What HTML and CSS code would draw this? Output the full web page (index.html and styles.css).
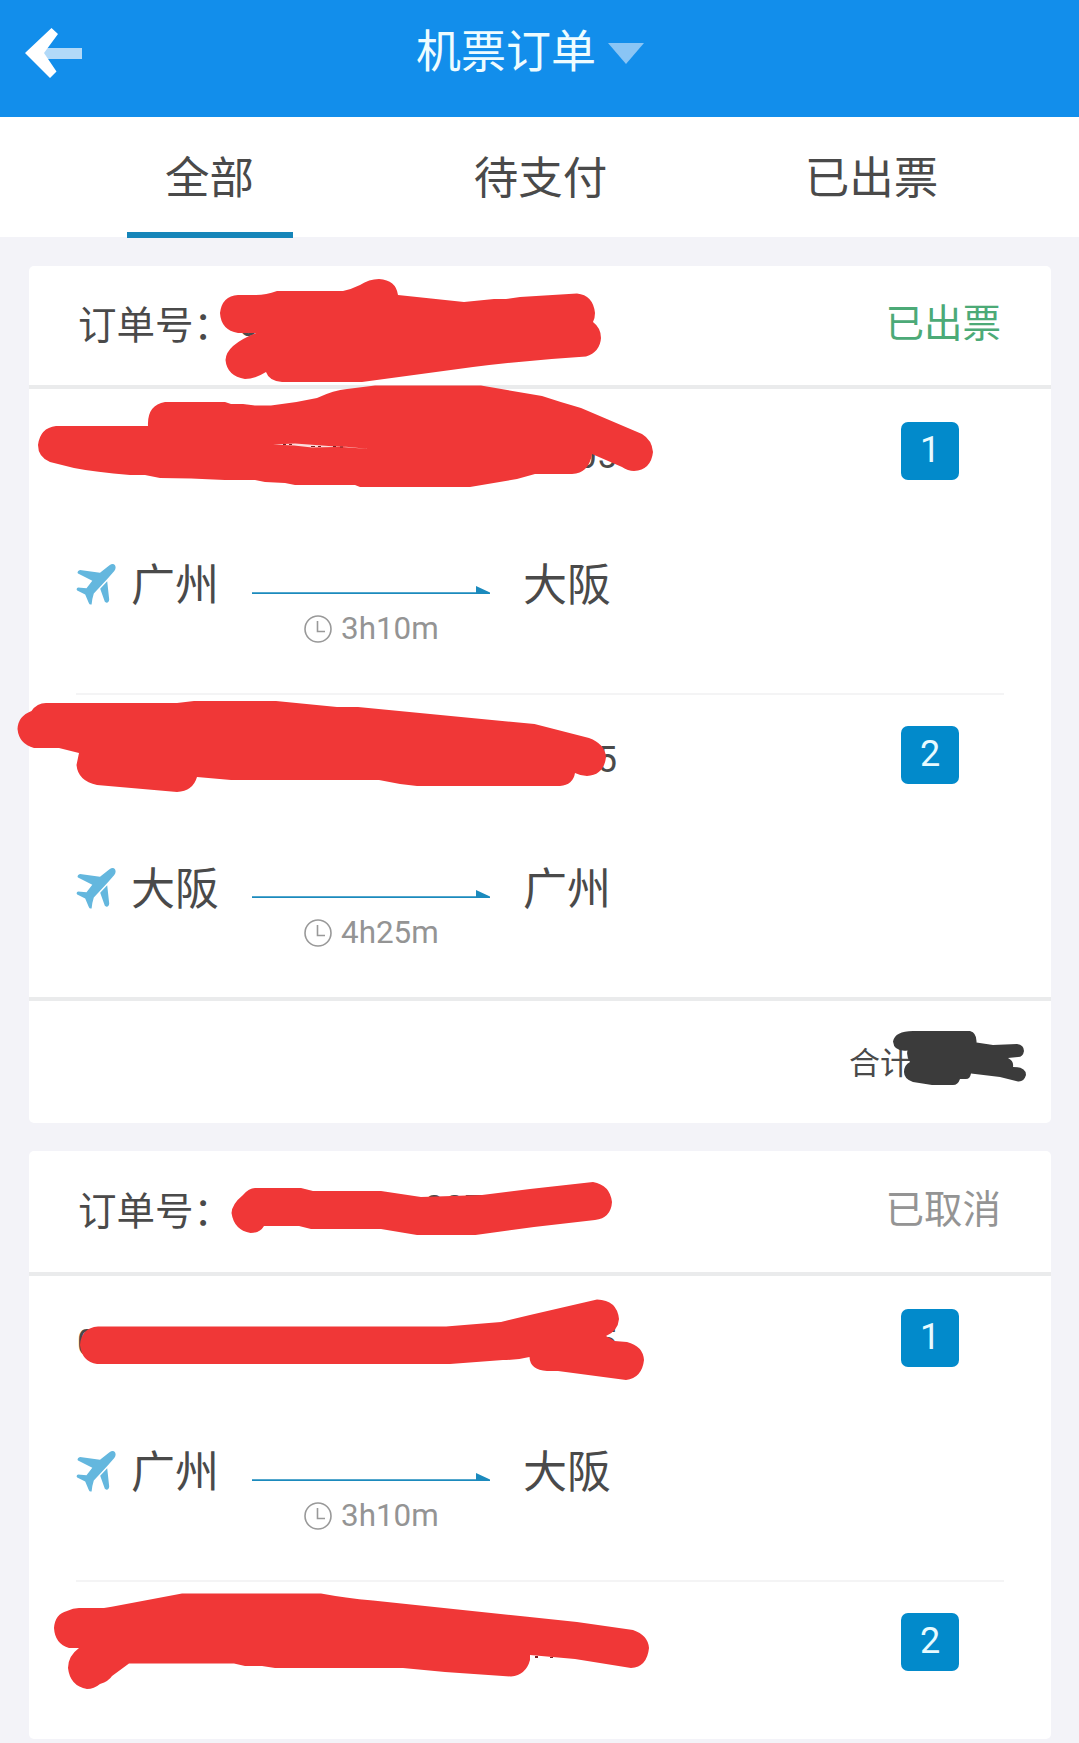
FILE: index.html
```html
<!DOCTYPE html>
<html lang="zh-Hans">
<head>
  <meta charset="UTF-8" />
  <meta name="viewport" content="width=device-width, initial-scale=1.0"/>
  <title>机票订单</title>
  <link rel="stylesheet" href="styles.css">
</head>
<body>
  <!-- 共用图标 -->
  <svg class="icon-defs">
    <symbol id="plane" viewBox="0 0 40 42">
      <path d="M4 7 24 9.7 33.5 2.2Q37-.3 39 2.2 40.5 5 38.3 8L31.5 15.7 17.8 30.5Q16 36 15.6 41.5 13.4 42 12.8 40L9.2 31.5 1.2 27.6Q-.2 25.5 2 24.6L10.5 25.2 16.3 17.7 2 10.6Q.5 8 4 7Z"/>
      <path d="M31.2 18.2 33.2 36.5Q33 40 30 39.6 28.6 39.3 28.2 37L24.2 25.7Z"/>
    </symbol>
    <symbol id="clock" viewBox="0 0 28 28">
      <circle cx="14" cy="14" r="13"/>
      <path d="M13.5 6v10.5H21"/>
    </symbol>
    <symbol id="arrow" viewBox="0 0 238 8">
      <path d="M0 6.2H224V0L238 6.6V8H0Z"/>
    </symbol>
  </svg>

  <header class="header">
    <svg class="back" viewBox="0 0 58 50">
      <path class="back-shaft" d="M17 20H57V31H17Z"/>
      <path class="back-head" d="M26.500 0 33 6 19 25 31.500 43.500 25 50 0 25Z"/>
    </svg>
    <div class="title">
      <h1>机票订单</h1>
      <svg class="caret" viewBox="0 0 36 21"><path d="M0 0H36L18 21Z"/></svg>
    </div>
  </header>

  <nav class="tabs">
    <a class="tab active">全部</a>
    <a class="tab">待支付</a>
    <a class="tab">已出票</a>
  </nav>

  <main class="orders">
    <section class="order">
      <div class="order-head">
        <span class="order-no">订单号：<span class="digits first">6</span></span>
        <span class="status issued">已出票</span>
      </div>
      <div class="segment">
        <div class="segment-head">
          <div class="segment-info"><span></span><span>05</span></div>
          <span class="badge">1</span>
        </div>
        <div class="route">
          <svg class="plane"><use href="#plane"/></svg>
          <span class="city">广州</span>
          <div class="flight">
            <svg class="arrow"><use href="#arrow"/></svg>
            <div class="duration"><svg class="clock"><use href="#clock"/></svg>3h10m</div>
          </div>
          <span class="city">大阪</span>
        </div>
      </div>
      <div class="segment">
        <div class="segment-head">
          <div class="segment-info"><span></span><span>5</span></div>
          <span class="badge">2</span>
        </div>
        <div class="route">
          <svg class="plane"><use href="#plane"/></svg>
          <span class="city">大阪</span>
          <div class="flight">
            <svg class="arrow"><use href="#arrow"/></svg>
            <div class="duration"><svg class="clock"><use href="#clock"/></svg>4h25m</div>
          </div>
          <span class="city">广州</span>
        </div>
      </div>
      <div class="order-total">合计</div>
    </section>

    <section class="order">
      <div class="order-head canceled">
        <span class="order-no">订单号：<span class="digits middle">007</span></span>
        <span class="status">已取消</span>
      </div>
      <div class="segment">
        <div class="segment-head">
          <div class="segment-info"><span>0</span><span>5</span></div>
          <span class="badge">1</span>
        </div>
        <div class="route">
          <svg class="plane"><use href="#plane"/></svg>
          <span class="city">广州</span>
          <div class="flight">
            <svg class="arrow"><use href="#arrow"/></svg>
            <div class="duration"><svg class="clock"><use href="#clock"/></svg>3h10m</div>
          </div>
          <span class="city">大阪</span>
        </div>
      </div>
      <div class="segment last">
        <div class="segment-head">
          <div class="segment-info"></div>
          <span class="badge">2</span>
        </div>
      </div>
    </section>
  </main>

  <!-- 涂抹遮挡 -->
  <svg class="marks" viewBox="0 0 1079 1743">
    <path d="M238 295H256Q266 295 277 291H343Q352 289 360 285 369 279 379 279 396 280 398 295L464 302 494 299H506L520 297 577 293.500Q593 295 595 313 595 318 593 322 601 328 601 338 600 352 586 356.500 530 360 473 367L362 382H282Q269 381 266 372 255 379 245 379 227 376 225.500 360 226 345 256 333H238Q221 330 220 313 222 296 238 295Z"/>
    <path d="M56 426H148Q147 405 165 402H225L231 404H243L255 405.500H271Q295 403 317 398 334 390 347 389L375 385.500H481L542 396Q560 402 581 408L642 434Q652 440 653 452 651 470 634 471 628 471 622 467L592 454Q589 473 572 474H535L517 479 470 487H360L355 485H295L285 483 265 482 255 480H225Q190 478 160 478L145 475H130Q95 472 74 468L50 462Q38 457 38 445 40 428 56 426Z"/>
    <path class="gap" d="M273 444.500 295 443.500 369 449 346 446.700 312 447.500 294 445.500Z"/>
    <path class="ink" d="M283 444h3v1h-3ZM289 444h3v1h-3ZM311 446h4v1h-4ZM318 446h3v1h-3ZM333 446h3v1h-3ZM340 446.500h3v1h-3Z"/>
    <path d="M31.500 711Q37 703 46 703H177L194 701H276L337 707H358L534.500 724 589 738Q605 744 606 757 604 775 587 776 581 776 575 773 573 785 560 786H417L400 784 379 780H231L197 777Q193 791 177 792L97 785Q78 781 76.500 765L79 753 59 748H34Q19 744 17.500 729 18 716 31.500 711Z"/>
    <path class="dark" d="M893 1041.500Q895 1031 913 1031H970Q977 1033 976.500 1042.500L993 1045 1017 1044Q1024 1045 1024 1051 1023 1057 1018 1057L1008 1058Q1014 1061 1013 1067 1026 1067 1026 1075 1024 1082 1018 1081.500L1000 1077 971 1073.500Q970 1079 966 1079H960Q958 1085 953 1085H932L913 1082Q904 1079 904 1072 904 1065 910 1062 906 1056 907.500 1050.500 894 1052 893 1041.500Z"/>
    <path d="M231.500 1213Q232 1204 243 1195 249 1188 255 1188H301L313 1191H381L421 1197 482 1195 530 1189 593 1182Q610 1185 612 1202 611 1218 595 1220L534 1227 475.500 1235H417L381 1229H311L299 1226H264Q260 1233 250.500 1233 234 1230 231.500 1213Z"/>
    <path d="M98 1326.500H446L501 1322 530 1315 597 1299.500Q617 1300 619 1319 618 1331 606 1336L614.500 1341 627 1342Q643 1346 644 1360 642 1378 626 1380L558 1371H547Q530 1370 529.500 1357 518 1360 503 1360L450 1364H97Q82 1362 80 1345 81 1328 98 1326.500Z"/>
    <path d="M54 1628Q55 1614 67 1611 73 1608 79 1608H104Q111 1607 121 1605L182 1593.500H321Q345 1598 373 1600.500L525 1616.500 577 1622 633 1630Q648 1635 649 1648 647 1667 631 1668L575 1659 530 1655V1660Q526 1675 511 1676.500L445 1672 403 1668H275L262 1666H245L234 1663.500H129L112 1676Q109 1681 100 1684 94 1689 87 1689 70 1686 68 1668 68 1656 79 1648H69Q55 1644 54 1628Z"/>
    <path class="ink" d="M535 1656h3v2h-3ZM550 1657h3v1h-3Z"/>
  </svg>
</body>
</html>
```
FILE: styles.css
```css
* {
  box-sizing: border-box;
}
body {
  position: relative;
  margin: 0;
  height: 1743px;
  overflow: hidden;
  font-family: Roboto, 'Noto Sans CJK SC', sans-serif;
  background: #f3f3f8;
  color: #4a4a4a;
}
.icon-defs {
  display: none;
}
.header {
  display: grid;
  grid-template-columns: 1fr auto 1fr;
  align-items: center;
  height: 117px;
  padding: 0 25px 12px;
  background: #128eeb;
}
.back {
  width: 58px;
  height: 50px;
}
.back-head {
  fill: #fff;
}
.back-shaft {
  fill: #b1d9f8;
}
.title {
  display: flex;
  align-items: center;
  gap: 12px;
  margin-right: 19px;
}
h1 {
  margin: 0;
  font-size: 45px;
  line-height: 60px;
  font-weight: 400;
  color: #eefcff;
}
.caret {
  width: 36px;
  height: 21px;
  margin-top: 2px;
  fill: #8ac5f5;
}
.tabs {
  display: flex;
  height: 120px;
  padding: 0 42px 0 44px;
  background: #fff;
}
.tab {
  position: relative;
  flex: 1;
  text-align: center;
  font-size: 44.5px;
  line-height: 125px;
}
.tab.active::after {
  content: '';
  position: absolute;
  left: 50%;
  bottom: -1px;
  width: 166px;
  height: 6px;
  margin-left: -83px;
  background: #1585b9;
}
.orders {
  display: flex;
  flex-direction: column;
  gap: 28px;
  padding: 29px 28px 0 29px;
}
.order {
  background: #fff;
  border-radius: 5px;
}
.order-head {
  display: flex;
  justify-content: space-between;
  height: 123px;
  padding: 0 50px 0 49px;
  border-bottom: 4px solid #eaebec;
  font-size: 38.5px;
  line-height: 120px;
}
.order-head.canceled {
  height: 125px;
  padding-top: 1px;
}
.order-no {
  display: flex;
}
.digits {
  font-size: 36px;
  line-height: 117px;
}
.digits.first {
  margin-left: 6px;
}
.digits.middle {
  margin-left: 192px;
  line-height: 114px;
}
.status {
  line-height: 116px;
  color: #949494;
}
.status.issued {
  color: #4caa77;
}
.segment {
  height: 304px;
  margin: 0 47px;
}
.segment + .segment {
  border-top: 2px solid #f4f4f5;
}
.segment-head {
  display: flex;
  justify-content: space-between;
  align-items: flex-start;
  padding: 33px 45px 0 1px;
}
.segment + .segment .segment-head {
  padding-top: 31px;
}
.segment-info {
  display: flex;
  justify-content: space-between;
  width: 540px;
  height: 58px;
  font-size: 36px;
  line-height: 68px;
}
.badge {
  width: 58px;
  height: 58px;
  border-radius: 7px;
  background: #028acb;
  color: #e8fbff;
  font-size: 36px;
  line-height: 56px;
  text-align: center;
}
.route {
  display: flex;
  align-items: flex-start;
  margin-top: 81px;
}
.plane {
  width: 40px;
  height: 42px;
  margin-top: 2px;
  fill: #64b7de;
}
.city {
  width: 89px;
  margin-left: 15px;
  font-size: 44px;
  line-height: 50px;
  white-space: nowrap;
}
.flight {
  width: 238px;
  margin: 25px 18px 0 32px;
}
.arrow {
  display: block;
  width: 238px;
  height: 8px;
  fill: #1b8abd;
}
.duration {
  display: flex;
  align-items: center;
  gap: 9px;
  margin: 20px 0 0 52px;
  font-size: 31.4px;
  line-height: 30px;
  color: #949494;
}
.clock {
  width: 28px;
  height: 28px;
  fill: none;
  stroke: #999;
  stroke-width: 1.600;
}
.order-total {
  height: 126px;
  padding-left: 820px;
  border-top: 4px solid #eaebec;
  font-size: 31px;
  line-height: 125px;
}
.segment.last {
  height: 159px;
}
.marks {
  position: absolute;
  top: 0;
  left: 0;
  width: 1079px;
  height: 1743px;
  fill: #f03737;
}
.marks .dark {
  fill: #3b3b3b;
}
.marks .gap {
  fill: #fbdcdc;
}
.marks .ink {
  fill: #7a2226;
}
```
